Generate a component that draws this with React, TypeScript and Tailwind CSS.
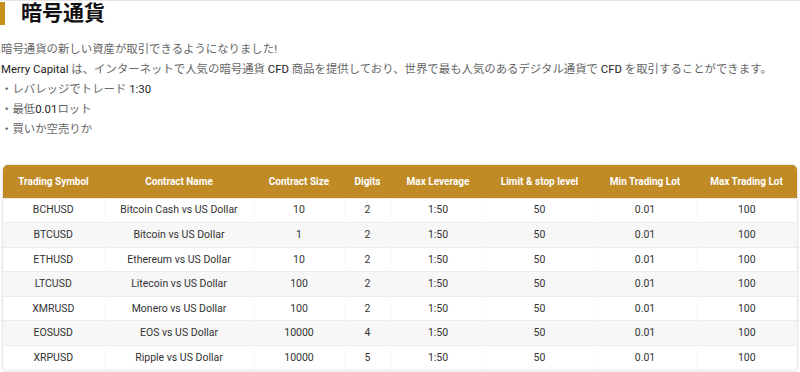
const rows = [
  ["BCHUSD", "Bitcoin Cash vs US Dollar", "10", "2"],
  ["BTCUSD", "Bitcoin vs US Dollar", "1", "2"],
  ["ETHUSD", "Ethereum vs US Dollar", "10", "2"],
  ["LTCUSD", "Litecoin vs US Dollar", "100", "2"],
  ["XMRUSD", "Monero vs US Dollar", "100", "2"],
  ["EOSUSD", "EOS vs US Dollar", "10000", "4"],
  ["XRPUSD", "Ripple vs US Dollar", "10000", "5"],
];

const heads = [
  "Trading Symbol",
  "Contract Name",
  "Contract Size",
  "Digits",
  "Max Leverage",
  "Limit & stop level",
  "Min Trading Lot",
  "Max Trading Lot",
];

export default function App() {
  return (
    <main className="h-[372px] w-[800px] overflow-hidden border-t border-[#e5e5e5] bg-white font-['Roboto','Noto_Sans_CJK_JP',sans-serif]">
      <div className="flex h-[25px] items-center">
        <div className="h-[23px] w-[5px] bg-[#c8901f]" />
        <h1 className="ml-[16px] text-[21px] leading-none font-bold text-[#111]">暗号通貨</h1>
      </div>

      <div className="mt-[13px] px-[1px] text-[11.4px] leading-[20px] whitespace-nowrap text-[#666]">
        <p>暗号通貨の新しい資産が取引できるようになりました!</p>
        <p>
          <span className="text-[#222]">Merry Capital</span> は、インターネットで人気の暗号通貨 <span className="text-[#222]">CFD</span> 商品を提供しており、世界で最も人気のあるデジタル通貨で <span className="text-[#222]">CFD</span> を取引することができます。
        </p>
        <p>・レバレッジでトレード <span className="text-[#222]">1:30</span></p>
        <p>・最低<span className="text-[#222]">0.01</span>ロット</p>
        <p>・買いか空売りか</p>
      </div>

      <div className="mx-[2px] mt-[25px] overflow-hidden rounded-[6px] border border-[#e8e8e8] shadow-[0_1px_3px_rgba(0,0,0,0.08)]">
        <table className="w-full table-fixed border-collapse text-center">
          <colgroup>
            <col className="w-[101px]" />
            <col className="w-[150px]" />
            <col className="w-[90px]" />
            <col className="w-[47px]" />
            <col className="w-[94px]" />
            <col className="w-[109px]" />
            <col className="w-[102px]" />
            <col />
          </colgroup>
          <thead>
            <tr className="h-[33px] bg-[#c08a25]">
              {heads.map((h) => (
                <th key={h} className="text-[10px] font-bold text-white">
                  {h}
                </th>
              ))}
            </tr>
          </thead>
          <tbody>
            {rows.map((r, i) => (
              <tr
                key={r[0]}
                className={`h-[24.6px] border-t border-[#ececec] text-[10.5px] text-[#333] ${i % 2 === 1 ? "bg-[#f7f7f7]" : "bg-white"}`}
              >
                <td className="border-r border-[#f9f9f9]">{r[0]}</td>
                <td className="border-r border-[#f9f9f9]">{r[1]}</td>
                <td className="border-r border-[#f9f9f9]">{r[2]}</td>
                <td className="border-r border-[#f9f9f9]">{r[3]}</td>
                <td className="border-r border-[#f9f9f9]">1:50</td>
                <td className="border-r border-[#f9f9f9]">50</td>
                <td className="border-r border-[#f9f9f9]">0.01</td>
                <td>100</td>
              </tr>
            ))}
          </tbody>
        </table>
      </div>
    </main>
  );
}
